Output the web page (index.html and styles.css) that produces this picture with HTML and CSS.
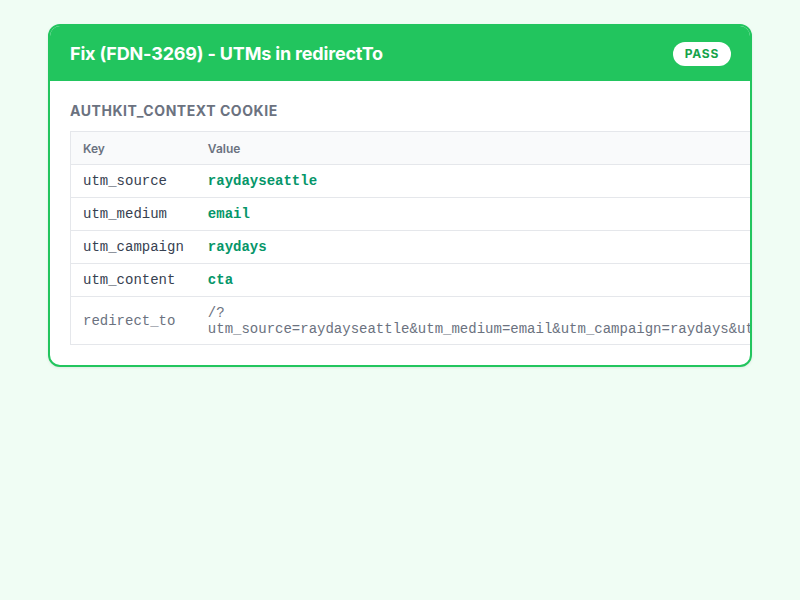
FILE: index.html
```html
<!DOCTYPE html>
<html>
<head>
<meta charset="utf-8">
<link rel="stylesheet" href="styles.css">
</head>
<body>
<div class="card">
  <div class="card-header">
    <h1 class="title">Fix (FDN-3269) - UTMs in redirectTo</h1>
    <span class="badge">PASS</span>
  </div>
  <div class="card-body">
    <h2 class="section-title">authkit_context cookie</h2>
    <table class="kv">
      <thead>
        <tr><th class="col-key">Key</th><th>Value</th></tr>
      </thead>
      <tbody>
        <tr><td class="key">utm_source</td><td class="val">raydayseattle</td></tr>
        <tr><td class="key">utm_medium</td><td class="val">email</td></tr>
        <tr><td class="key">utm_campaign</td><td class="val">raydays</td></tr>
        <tr><td class="key">utm_content</td><td class="val">cta</td></tr>
        <tr class="muted"><td class="key">redirect_to</td><td class="val-plain">/?utm_source=raydayseattle&amp;utm_medium=email&amp;utm_campaign=raydays&amp;utm_content=cta</td></tr>
      </tbody>
    </table>
  </div>
</div>
</body>
</html>
```

FILE: styles.css
```css
html, body {
  margin: 0;
  padding: 0;
}
body {
  background: #f0fdf4;
  font-family: Inter, "Liberation Sans", sans-serif;
  padding: 24px 48px;
}
.card {
  background: #ffffff;
  border: 2px solid #22c55e;
  border-radius: 12px;
  overflow: hidden;
  box-shadow: 0 1px 3px rgba(0,0,0,0.08);
}
.card-header {
  background: #22c55e;
  display: flex;
  align-items: center;
  justify-content: space-between;
  padding: 16px 19px 15px 20px;
  height: 24px;
}
.title {
  margin: 0;
  color: #ffffff;
  font-size: 18px;
  font-weight: 700;
  line-height: 24px;
  letter-spacing: -0.01em;
}
.badge {
  background: #ffffff;
  color: #16a34a;
  font-size: 12px;
  font-weight: 700;
  letter-spacing: 0.06em;
  line-height: 16px;
  padding: 4px 12px;
  border-radius: 999px;
}
.card-body {
  padding: 21px 20px 20px;
}
.section-title {
  margin: 0 0 11px;
  font-size: 14px;
  line-height: 18px;
  font-weight: 700;
  text-transform: uppercase;
  letter-spacing: 0.04em;
  color: #6b7280;
}
.kv {
  width: 100%;
  border-collapse: collapse;
  border: 1px solid #e5e7eb;
}
.kv th {
  background: #f9fafb;
  text-align: left;
  font-size: 12px;
  font-weight: 600;
  color: #6b7280;
  padding: 8px 12px;
  height: 16px;
  border-bottom: 1px solid #e5e7eb;
}
.col-key {
  width: 102px;
}
.kv td {
  padding: 8px 12px;
  font-family: "Liberation Mono", "DejaVu Sans Mono", monospace;
  font-size: 14px;
  line-height: 16px;
  border-bottom: 1px solid #e5e7eb;
  vertical-align: middle;
  white-space: nowrap;
}
.kv td.key {
  color: #374151;
}
.kv td.val {
  color: #059669;
  font-weight: 700;
}
.kv td.val-plain {
  white-space: normal;
  color: #6b7280;
  padding-bottom: 7px;
}
.kv tr.muted td.key {
  color: #6b7280;
}
```
